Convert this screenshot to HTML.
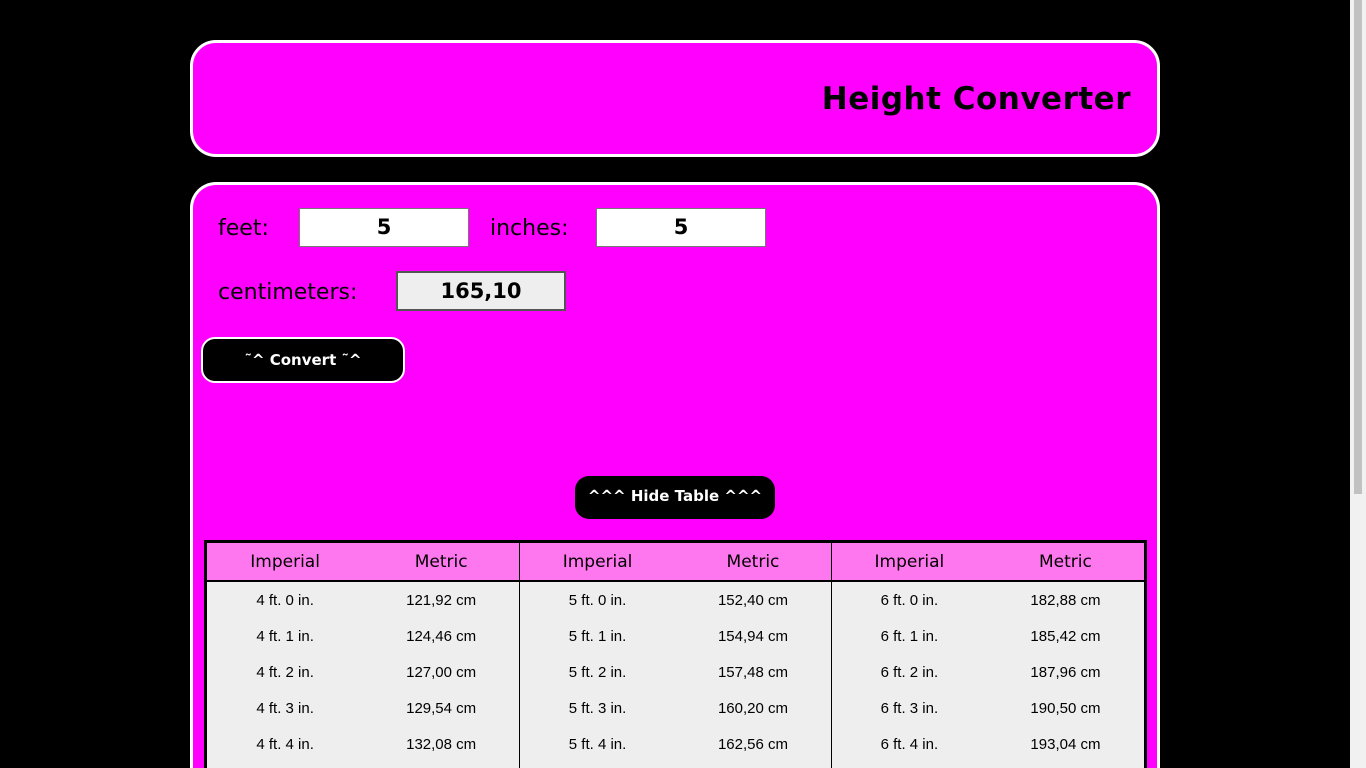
<!DOCTYPE html>
<html><head><meta charset="utf-8"><style>
html,body{margin:0;padding:0;background:#000;overflow:hidden;width:1366px;height:768px;}
body{font-family:"DejaVu Sans","Liberation Sans",sans-serif;position:relative;}
.sb{position:absolute;right:0;top:0;width:16px;height:768px;background:#f1f1f1;}
.sb div{position:absolute;left:4px;top:0px;width:8px;height:494px;background:#c1c1c1;}
.panel{position:absolute;left:190px;width:964px;background:#f0f;border:3px solid #fff;border-radius:26px;}
.h1{top:40px;height:111px;}
.h1 span{position:absolute;right:26px;top:38px;font-size:31px;font-weight:bold;color:#000;letter-spacing:0.5px;}
.main{top:182px;height:583px;border-bottom:none;border-bottom-left-radius:0;border-bottom-right-radius:0;}
.lbl{position:absolute;font-size:22px;color:#000;}
.inp{position:absolute;height:36px;border:1px solid #777;background:#fff;text-align:center;font-size:21px;line-height:36px;font-weight:bold;box-sizing:border-box;}
.btn{position:absolute;background:#000;color:#fff;font-size:15px;font-weight:bold;text-align:center;}
.tw{position:absolute;left:204px;top:540px;width:943px;height:228px;overflow:hidden;}
table{width:943px;border-collapse:collapse;border:3px solid #000;}
th{background:#ff77ee;height:37px;font-weight:normal;font-size:17px;border-bottom:2px solid #000;padding:0;}
td{background:#eee;height:36px;font-family:"Liberation Sans",sans-serif;font-size:15px;text-align:center;padding:0;}
.d{border-left:1px solid #000;}
</style></head><body>
<div class="panel h1"><span>Height Converter</span></div>
<div class="panel main"></div>
<div class="lbl" style="left:218px;top:216px">feet:</div>
<div class="inp" style="left:299px;top:208px;width:170px;height:39px">5</div>
<div class="lbl" style="left:490px;top:216px">inches:</div>
<div class="inp" style="left:596px;top:208px;width:170px;height:39px">5</div>
<div class="lbl" style="left:218px;top:280px">centimeters:</div>
<div class="inp" style="left:396px;top:271px;width:170px;height:40px;background:#eee;border:2px solid #555">165,10</div>
<div class="btn" style="left:201px;top:337px;width:200px;height:42px;line-height:42px;border:2px solid #fff;border-radius:14px">˜^ Convert ˜^</div>
<div class="btn" style="left:575px;top:476px;width:200px;height:43px;line-height:41px;border-radius:14px">^^^ Hide Table ^^^</div>
<div class="tw"><table>
<tr><th>Imperial</th><th>Metric</th><th class="d">Imperial</th><th>Metric</th><th class="d">Imperial</th><th>Metric</th></tr>
<tr><td>4 ft. 0 in.</td><td>121,92 cm</td><td class="d">5 ft. 0 in.</td><td>152,40 cm</td><td class="d">6 ft. 0 in.</td><td>182,88 cm</td></tr>
<tr><td>4 ft. 1 in.</td><td>124,46 cm</td><td class="d">5 ft. 1 in.</td><td>154,94 cm</td><td class="d">6 ft. 1 in.</td><td>185,42 cm</td></tr>
<tr><td>4 ft. 2 in.</td><td>127,00 cm</td><td class="d">5 ft. 2 in.</td><td>157,48 cm</td><td class="d">6 ft. 2 in.</td><td>187,96 cm</td></tr>
<tr><td>4 ft. 3 in.</td><td>129,54 cm</td><td class="d">5 ft. 3 in.</td><td>160,20 cm</td><td class="d">6 ft. 3 in.</td><td>190,50 cm</td></tr>
<tr><td>4 ft. 4 in.</td><td>132,08 cm</td><td class="d">5 ft. 4 in.</td><td>162,56 cm</td><td class="d">6 ft. 4 in.</td><td>193,04 cm</td></tr>
<tr><td>4 ft. 5 in.</td><td>134,62 cm</td><td class="d">5 ft. 5 in.</td><td>165,10 cm</td><td class="d">6 ft. 5 in.</td><td>195,58 cm</td></tr>
</table></div>
<div class="sb"><div></div></div>
</body></html>
